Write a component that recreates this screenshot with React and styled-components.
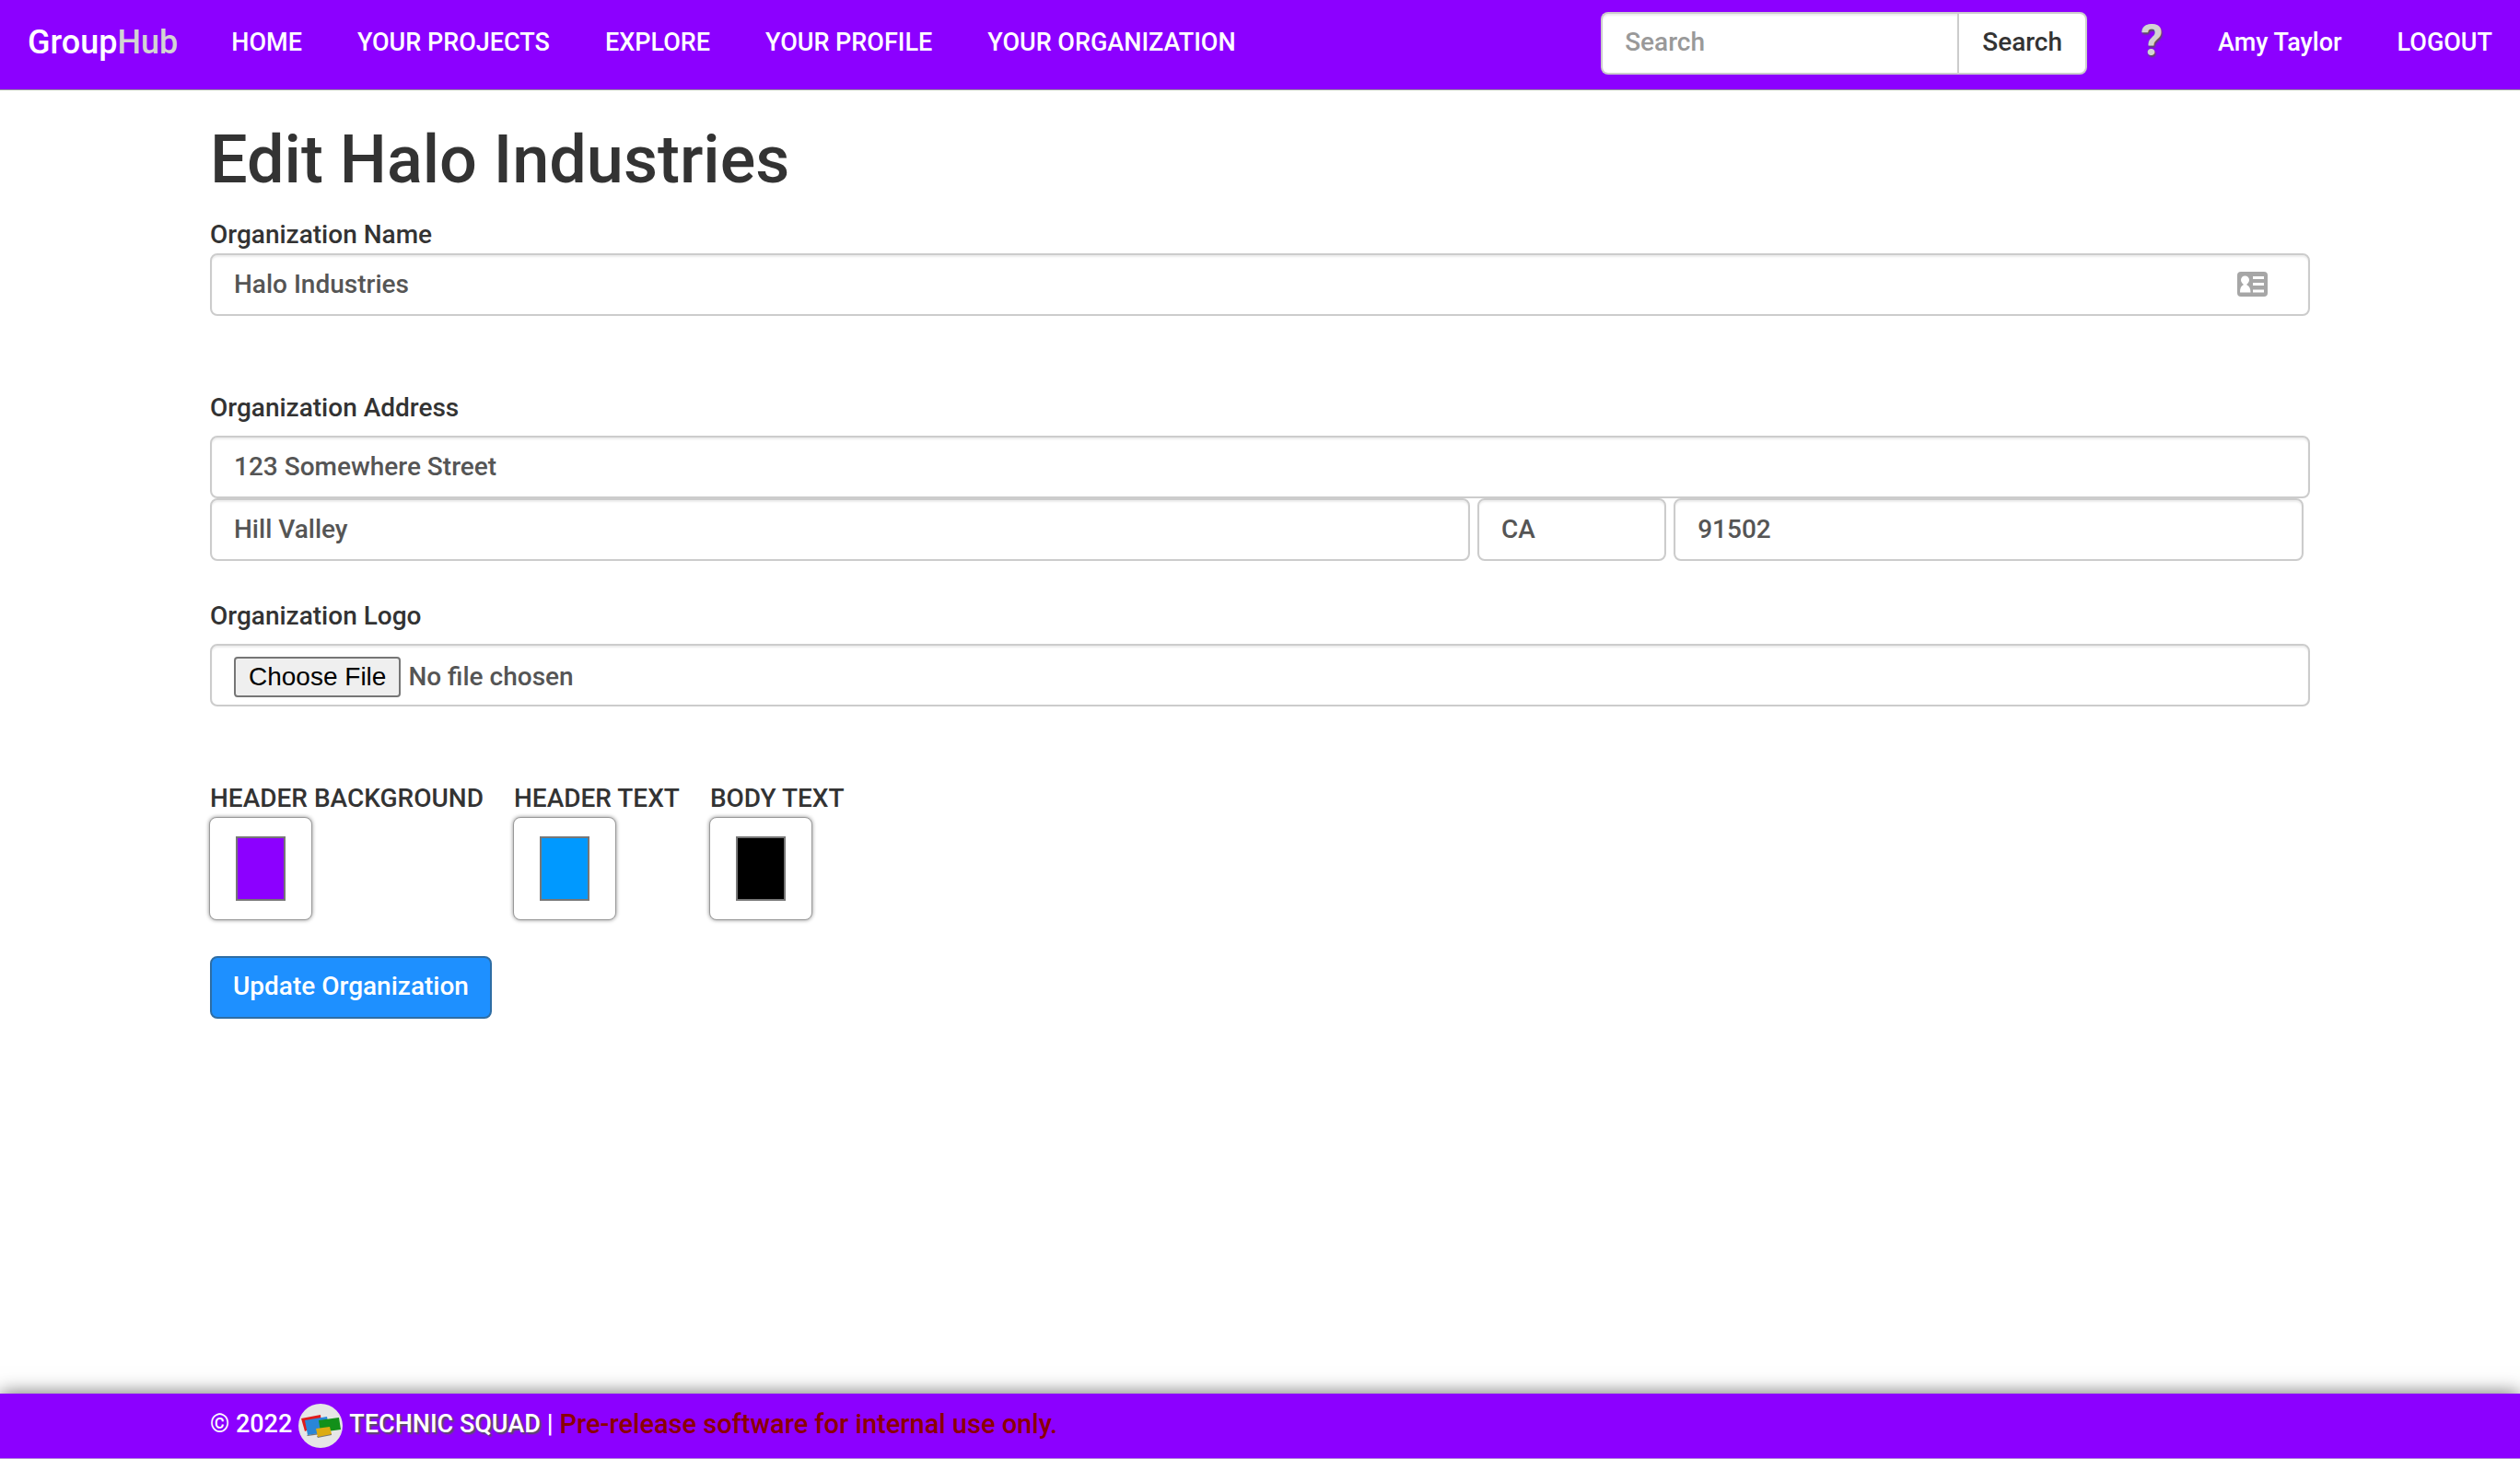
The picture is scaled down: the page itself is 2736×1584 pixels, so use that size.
import React from "react";
import styled, { createGlobalStyle } from "styled-components";

const FONT = `Roboto, "Liberation Sans", sans-serif`;
const PURPLE = "#8c00ff";

const GlobalStyle = createGlobalStyle`
  *, *::before, *::after { box-sizing: border-box; }
  body {
    margin: 0;
    background: #fff;
    color: #333;
    font-family: ${FONT};
    font-size: 28px;
    font-weight: 500;
    line-height: 40px;
  }
  input, button { font: inherit; }
`;

const Page = styled.div`
  display: flex;
  flex-direction: column;
  min-height: 100vh;
`;

const Navbar = styled.nav`
  display: flex;
  align-items: flex-start;
  height: 98px;
  padding: 13px 0 0;
  background: ${PURPLE};
  border-bottom: 1px solid #999;
`;

const Brand = styled.a`
  padding: 0 28px 0 30px;
  color: #fff;
  font-size: 36px;
  line-height: 66px;
  text-decoration: none;
`;

const BrandAccent = styled.span`
  color: #d3d3d3;
`;

const NavLink = styled.a`
  padding: 0 30px;
  color: #fff;
  font-size: 27px;
  line-height: 66px;
  text-decoration: none;
  white-space: nowrap;
`;

const SearchForm = styled.form`
  display: flex;
  width: 528px;
  height: 68px;
  margin-left: auto;
  margin-right: 28px;
`;

const SearchInput = styled.input`
  flex: 1;
  min-width: 0;
  padding: 0 24px 2px;
  color: #555;
  background: #fff;
  border: 2px solid #ccc;
  border-right-width: 0;
  border-radius: 8px 0 0 8px;
  box-shadow: inset 0 2px 2px rgba(0, 0, 0, 0.075);
  &::placeholder { color: #999; opacity: 1; }
`;

const SearchButton = styled.button`
  width: 141px;
  padding: 0 0 2px;
  color: #333;
  background: #fff;
  border: 2px solid #ccc;
  border-radius: 0 8px 8px 0;
`;

const HelpLink = styled(NavLink)`
  color: #d3d3d3;
  font-size: 48px;
  font-weight: 700;
  line-height: 62px;
  text-shadow: 1px 2px 2px #555;
`;

const Main = styled.main`
  width: 83.3333%;
  margin: 0 auto;
  padding-bottom: 40px;
`;

const Title = styled.h1`
  margin: 36px 0 21px;
  font-size: 72px;
  font-weight: 500;
  line-height: 80px;
`;

const Label = styled.label`
  display: block;
  margin-bottom: ${(p) => (p.$spaced ? "10px" : "0")};
`;

const Group = styled.div`
  margin-bottom: ${(p) => p.$gap}px;
`;

const InputWrap = styled.div`
  position: relative;
`;

const TextInput = styled.input`
  display: block;
  width: ${(p) => p.$width || "100%"};
  height: 68px;
  padding: 0 24px 2px;
  color: #555;
  background: #fff;
  border: 2px solid #ccc;
  border-radius: 8px;
  box-shadow: inset 0 2px 2px rgba(0, 0, 0, 0.075);
`;

const CardIcon = styled.svg`
  position: absolute;
  top: 20px;
  right: 46px;
  width: 33px;
  height: 27px;
`;

const AddressRow = styled.div`
  display: flex;
  gap: 8px;
`;

const FileInput = styled(TextInput)`
  padding: 10px 24px;
  &::file-selector-button {
    height: 44px;
    margin: 2px 8px 0 0;
    padding: 0 14px;
    color: #000;
    background: #efefef;
    border: 2px solid #767676;
    border-radius: 4px;
    font: 400 28px/38px "Liberation Sans", Arial, sans-serif;
  }
`;

const Colors = styled.div`
  display: flex;
  gap: 33px;
  margin-bottom: 39px;
`;

const ColorInput = styled.input`
  display: block;
  width: 112px;
  height: 112px;
  margin-left: -1px;
  padding: 20px 28px;
  background: #fff;
  border: 1px solid #999;
  border-radius: 8px;
  box-shadow: 0 0 4px rgba(0, 0, 0, 0.45);
  &::-webkit-color-swatch-wrapper { padding: 0; }
  &::-webkit-color-swatch { border: 2px solid #777; border-radius: 0; }
`;

const SubmitButton = styled.button`
  display: block;
  height: 68px;
  padding: 0 23px 2px;
  color: #fff;
  background: #1e90ff;
  border: 2px solid #2e6da4;
  border-radius: 8px;
`;

const Footer = styled.footer`
  display: flex;
  height: 71px;
  margin-top: auto;
  padding: 0 8.3333% 4px;
  color: #fff;
  background: ${PURPLE};
  border-bottom: 1px solid #b48fd8;
  box-shadow: 0 0 20px rgba(0, 0, 0, 0.6);
`;

const FooterText = styled.p`
  display: flex;
  align-items: center;
  gap: 7px;
  margin: 0;
  font-size: 27px;
`;

const Squad = styled.a`
  color: #fff;
  text-decoration: none;
  text-shadow: 2px 2px 2px #555;
`;

const Logo = styled.svg`
  width: 48px;
  height: 48px;
  margin-top: 4px;
`;

const Divider = styled.span`
  font-weight: 700;
`;

const Notice = styled.span`
  color: #8b0000;
  font-size: 29px;
`;

const LINKS = ["HOME", "YOUR PROJECTS", "EXPLORE", "YOUR PROFILE", "YOUR ORGANIZATION"];
const SWATCHES = [
  { id: "header-bg", label: "HEADER BACKGROUND", value: "#8c00ff" },
  { id: "header-text", label: "HEADER TEXT", value: "#0099ff" },
  { id: "body-text", label: "BODY TEXT", value: "#000000" },
];

export default function App() {
  return (
    <Page>
      <GlobalStyle />
      <Navbar>
        <Brand href="#">Group<BrandAccent>Hub</BrandAccent></Brand>
        {LINKS.map((text) => <NavLink href="#" key={text}>{text}</NavLink>)}
        <SearchForm onSubmit={(e) => e.preventDefault()}>
          <SearchInput type="text" placeholder="Search" aria-label="Search" />
          <SearchButton type="submit">Search</SearchButton>
        </SearchForm>
        <HelpLink href="#">?</HelpLink>
        <NavLink href="#">Amy Taylor</NavLink>
        <NavLink href="#">LOGOUT</NavLink>
      </Navbar>

      <Main>
        <Title>Edit Halo Industries</Title>
        <form onSubmit={(e) => e.preventDefault()}>
          <Group $gap={80}>
            <Label htmlFor="name">Organization Name</Label>
            <InputWrap>
              <TextInput id="name" type="text" defaultValue="Halo Industries" />
              <CardIcon viewBox="0 0 33 27" aria-hidden="true">
                <rect width="33" height="27" rx="4" fill="#a6a6a6" />
                <circle cx="8.5" cy="9" r="4.5" fill="#fff" />
                <path d="M6.5 12h4v2.500c2.500 1 4 3.500 4 8H3c0-4.500 1-7 3.500-8z" fill="#fff" />
                <path d="M17 5h12v3H17zM17 12h12v3H17zM17 19.500h12v3H17z" fill="#fff" />
              </CardIcon>
            </InputWrap>
          </Group>

          <Group $gap={40}>
            <Label htmlFor="street" $spaced>Organization Address</Label>
            <TextInput id="street" type="text" defaultValue="123 Somewhere Street" />
            <AddressRow>
              <TextInput $width="60%" type="text" aria-label="City" defaultValue="Hill Valley" />
              <TextInput $width="9%" type="text" aria-label="State" defaultValue="CA" />
              <TextInput $width="30%" type="text" aria-label="ZIP" defaultValue="91502" />
            </AddressRow>
          </Group>

          <Group $gap={80}>
            <Label htmlFor="logo" $spaced>Organization Logo</Label>
            <FileInput id="logo" type="file" />
          </Group>

          <Colors>
            {SWATCHES.map((s) => (
              <div key={s.id}>
                <Label htmlFor={s.id}>{s.label}</Label>
                <ColorInput id={s.id} type="color" defaultValue={s.value} />
              </div>
            ))}
          </Colors>
          <SubmitButton type="submit">Update Organization</SubmitButton>
        </form>
      </Main>

      <Footer>
        <FooterText>
          <span>© 2022</span>
          <Logo viewBox="0 0 48 48" aria-hidden="true">
            <circle cx="24" cy="24" r="24" fill="#e6e6e6" />
            <path d="M3 16l21-4 1 9-18 9z" fill="#e01b1b" />
            <path d="M9 34l22-4 1 2-22 3z" fill="#777" />
            <path d="M7 18l24-4 3 16-24 4z" fill="#2a86d8" />
            <path d="M22 18l22-3 2 13-22 3z" fill="#12901a" />
            <path d="M20 35l16-3v2l-15 3z" fill="#777" />
            <path d="M19 27l15-2 2 8-15 3z" fill="#dcab12" />
          </Logo>
          <Squad href="#">TECHNIC SQUAD</Squad>
          <Divider>|</Divider>
          <Notice>Pre-release software for internal use only.</Notice>
        </FooterText>
      </Footer>
    </Page>
  );
}
